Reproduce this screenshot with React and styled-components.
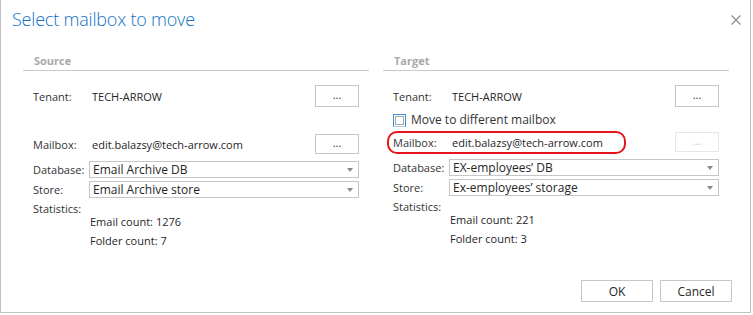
import React from "react";
import styled, { createGlobalStyle } from "styled-components";

const Global = createGlobalStyle`
  html, body { margin: 0; padding: 0; background: #fff; }
  body { font-family: "Open Sans", "Noto Sans", sans-serif; }
`;

const Dialog = styled.div`
  box-sizing: border-box;
  width: 751px;
  height: 313px;
  border: 1px solid #c0c0c0;
  border-top: none;
  display: flex;
  flex-direction: column;
  background: #fff;
  color: #262626;
  font-size: 11px;
`;

const Header = styled.div`
  height: 52px;
  display: flex;
  align-items: flex-start;
  justify-content: space-between;
  padding: 5px 9px 0 11px;
  box-sizing: border-box;
`;

const Title = styled.div`
  font-family: "Open Sans", sans-serif;
  font-weight: 300;
  font-size: 18px;
  line-height: 28px;
  color: #0f72c5;
  letter-spacing: -0.2px;
`;

const Close = styled.button`
  border: none;
  background: none;
  padding: 0;
  margin-top: 8px;
  width: 10px;
  height: 10px;
  display: block;
`;

const Body = styled.div`
  display: grid;
  grid-template-columns: 1fr 1fr;
  column-gap: 14px;
  padding: 0 21px 0 22px;
  flex: 1;
`;

const Column = styled.div`
  display: flex;
  flex-direction: column;
`;

const SectionTitle = styled.div`
  font-weight: 700;
  font-size: 11px;
  color: #a8a8a8;
  height: 18px;
  line-height: 18px;
  padding-left: 11px;
  border-bottom: 1px solid #c9c9c9;
  margin-bottom: 14px;
`;

const Row = styled.div`
  display: grid;
  grid-template-columns: 56px 1fr 44px;
  align-items: center;
  height: ${(p) => p.$h}px;
  padding: 0 10px 0 10px;
  position: relative;
`;

const Label = styled.span`
  color: #333;
  white-space: nowrap;
`;

const Value = styled.span`
  padding-left: 3px;
  white-space: nowrap;
`;

const DotsButton = styled.button`
  box-sizing: border-box;
  width: 44px;
  height: ${(p) => p.$h}px;
  border: 1px solid ${(p) => (p.disabled ? "#e6e6e6" : "#c6c6c6")};
  background: #fff;
  color: ${(p) => (p.disabled ? "#c8c8c8" : "#333")};
  font-family: inherit;
  font-size: 11px;
  padding: 0 0 3px;
  line-height: 1;
`;

const Spacer = styled.div`
  height: ${(p) => p.$h}px;
`;

const CheckRow = styled.label`
  display: flex;
  align-items: center;
  gap: 5px;
  height: 25px;
  padding-left: 10px;
  font-size: 12px;
  color: #333;
`;

const CheckBox = styled.span`
  box-sizing: border-box;
  width: 13px;
  height: 13px;
  border: 1px solid #3d8fd6;
  border-bottom-color: #b9c9d8;
  display: inline-flex;
  padding: 1px;
  margin-top: 1px;
  &::after {
    content: "";
    flex: 1;
    border: 1px solid #a8a8a8;
  }
`;

const Ring = styled.div`
  position: absolute;
  left: 4px;
  top: -1px;
  width: 239px;
  height: 23px;
  box-sizing: border-box;
  border: 2px solid #e8141b;
  border-radius: 10px;
  pointer-events: none;
`;

const SelectRow = styled.div`
  display: grid;
  grid-template-columns: 56px 1fr;
  align-items: center;
  padding: 0 10px 0 10px;
  margin-top: ${(p) => p.$mt}px;
`;

const SelectBox = styled.div`
  box-sizing: border-box;
  height: 17px;
  border: 1px solid #c6c6c6;
  display: flex;
  align-items: center;
  justify-content: space-between;
  padding: 0 5px 0 3px;
  font-size: 12px;
  color: #262626;
`;

const Arrow = styled.span`
  width: 0;
  height: 0;
  border-left: 3px solid transparent;
  border-right: 3px solid transparent;
  border-top: 4px solid #8a8a8a;
`;

const Stats = styled.div`
  padding-left: 10px;
  margin-top: 3px;
  display: flex;
  flex-direction: column;
`;

const StatsLabel = styled.div`
  line-height: 16px;
  color: #333;
`;

const StatLine = styled.div`
  padding-left: 57px;
  line-height: 17px;
  margin-top: ${(p) => p.$mt}px;
`;

const Footer = styled.div`
  display: flex;
  justify-content: flex-end;
  gap: 7px;
  padding: 0 18px 10px 0;
`;

const FooterButton = styled.button`
  box-sizing: border-box;
  width: 72px;
  height: 22px;
  border: 1px solid #c6c6c6;
  background: #fff;
  font-family: inherit;
  font-size: 12px;
  color: #262626;
`;

function Section({ title, tenant, mailbox, database, store, emails, folders, target }) {
  return (
    <Column>
      <SectionTitle>{title}</SectionTitle>
      <Row $h={22}>
        <Label>Tenant:</Label>
        <Value>{tenant}</Value>
        <DotsButton $h={22}>...</DotsButton>
      </Row>
      {target ? (
        <CheckRow>
          <CheckBox />
          Move to different mailbox
        </CheckRow>
      ) : (
        <Spacer $h={27} />
      )}
      <Row $h={20}>
        {target && <Ring />}
        <Label>Mailbox:</Label>
        <Value>{mailbox}</Value>
        <DotsButton $h={20} disabled={target}>...</DotsButton>
      </Row>
      <SelectRow $mt={7}>
        <Label>Database:</Label>
        <SelectBox>
          <span>{database}</span>
          <Arrow />
        </SelectBox>
      </SelectRow>
      <SelectRow $mt={3}>
        <Label>Store:</Label>
        <SelectBox>
          <span>{store}</span>
          <Arrow />
        </SelectBox>
      </SelectRow>
      <Stats>
        <StatsLabel>Statistics:</StatsLabel>
        <StatLine $mt={-4}>Email count: {emails}</StatLine>
        <StatLine $mt={2}>Folder count: {folders}</StatLine>
      </Stats>
    </Column>
  );
}

export default function App() {
  return (
    <>
      <Global />
      <Dialog>
        <Header>
          <Title>Select mailbox to move</Title>
          <Close aria-label="Close">
            <svg width="10" height="10" viewBox="0 0 10 10">
              <path d="M0.5 0.5 L9.5 9.5 M9.5 0.5 L0.5 9.5" stroke="#8c8c8c" strokeWidth="1.2" />
            </svg>
          </Close>
        </Header>
        <Body>
          <Section
            title="Source"
            tenant="TECH-ARROW"
            mailbox="edit.balazsy@tech-arrow.com"
            database="Email Archive DB"
            store="Email Archive store"
            emails="1276"
            folders="7"
          />
          <Section
            target
            title="Target"
            tenant="TECH-ARROW"
            mailbox="edit.balazsy@tech-arrow.com"
            database="EX-employees’ DB"
            store="Ex-employees’ storage"
            emails="221"
            folders="3"
          />
        </Body>
        <Footer>
          <FooterButton>OK</FooterButton>
          <FooterButton>Cancel</FooterButton>
        </Footer>
      </Dialog>
    </>
  );
}
